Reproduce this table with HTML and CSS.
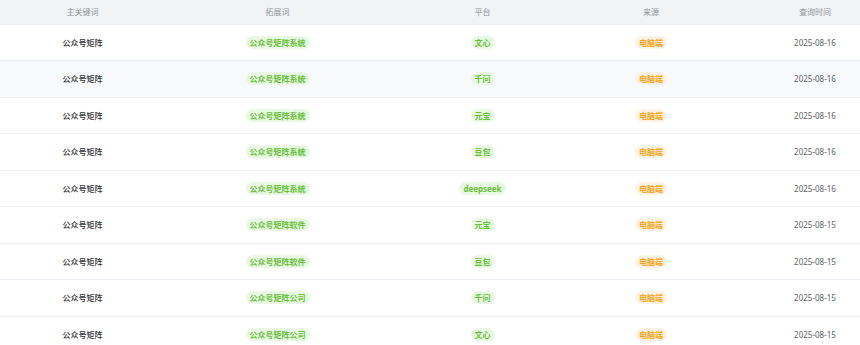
FILE: index.html
```html
<!DOCTYPE html>
<html lang="zh-CN">
<head>
<meta charset="utf-8">
<title>查询记录</title>
<link rel="stylesheet" href="styles.css">
</head>
<body>
<div class="wrap">
<table class="tbl">
<colgroup>
<col class="c1"><col class="c2"><col class="c3"><col class="c4"><col class="c5">
</colgroup>
<thead>
<tr><th>主关键词</th><th>拓展词</th><th>平台</th><th>来源</th><th>查询时间</th></tr>
</thead>
<tbody>
<tr><td class="kw">公众号矩阵</td><td><span class="tag ok">公众号矩阵系统</span></td><td><span class="tag ok">文心</span></td><td><span class="tag warn">电脑端</span></td><td class="time">2025-08-16</td></tr>
<tr class="hover"><td class="kw">公众号矩阵</td><td><span class="tag ok">公众号矩阵系统</span></td><td><span class="tag ok">千问</span></td><td><span class="tag warn">电脑端</span></td><td class="time">2025-08-16</td></tr>
<tr><td class="kw">公众号矩阵</td><td><span class="tag ok">公众号矩阵系统</span></td><td><span class="tag ok">元宝</span></td><td><span class="tag warn">电脑端</span></td><td class="time">2025-08-16</td></tr>
<tr><td class="kw">公众号矩阵</td><td><span class="tag ok">公众号矩阵系统</span></td><td><span class="tag ok">豆包</span></td><td><span class="tag warn">电脑端</span></td><td class="time">2025-08-16</td></tr>
<tr><td class="kw">公众号矩阵</td><td><span class="tag ok">公众号矩阵系统</span></td><td><span class="tag ok">deepseek</span></td><td><span class="tag warn">电脑端</span></td><td class="time">2025-08-16</td></tr>
<tr><td class="kw">公众号矩阵</td><td><span class="tag ok">公众号矩阵软件</span></td><td><span class="tag ok">元宝</span></td><td><span class="tag warn">电脑端</span></td><td class="time">2025-08-15</td></tr>
<tr><td class="kw">公众号矩阵</td><td><span class="tag ok">公众号矩阵软件</span></td><td><span class="tag ok">豆包</span></td><td><span class="tag warn">电脑端</span></td><td class="time">2025-08-15</td></tr>
<tr><td class="kw">公众号矩阵</td><td><span class="tag ok">公众号矩阵公司</span></td><td><span class="tag ok">千问</span></td><td><span class="tag warn">电脑端</span></td><td class="time">2025-08-15</td></tr>
<tr><td class="kw">公众号矩阵</td><td><span class="tag ok">公众号矩阵公司</span></td><td><span class="tag ok">文心</span></td><td><span class="tag warn">电脑端</span></td><td class="time">2025-08-15</td></tr>
</tbody>
</table>
</div>
</body>
</html>
```
FILE: styles.css
```css
html, body {
  margin: 0;
  padding: 0;
  background: #ffffff;
  overflow: hidden;
}
body {
  font-family: "Noto Sans", "Noto Sans CJK SC", sans-serif;
  font-size: 8px;
  color: #606266;
}
.wrap {
  width: 903px;
}
.tbl {
  width: 903px;
  border-collapse: collapse;
  table-layout: fixed;
}
.c1 { width: 165px; }
.c2 { width: 225px; }
.c3 { width: 185px; }
.c4 { width: 152px; }
.c5 { width: 176px; }
.tbl th {
  height: 23.5px;
  padding: 0;
  background: #f2f3f5;
  color: #909399;
  font-weight: 400;
  text-align: center;
  line-height: 23px;
  border-bottom: 1px solid #ebeef5;
}
.tbl td {
  height: 35.5px;
  padding: 0;
  text-align: center;
  border-bottom: 1px solid #ebeef5;
  vertical-align: middle;
}
.tbl tr.hover td {
  background: #f8f9fb;
}
.kw {
  color: #303133;
  font-weight: 500;
}
.time {
  color: #606266;
}
.tag {
  display: inline-block;
  height: 13px;
  line-height: 13px;
  padding: 0 4px;
  border-radius: 7px;
  font-weight: 700;
  white-space: nowrap;
}
.tag.ok {
  background: #e9f8e3;
  color: #67c23a;
}
.tag.warn {
  background: #fdf3e4;
  color: #f5a623;
}
```
